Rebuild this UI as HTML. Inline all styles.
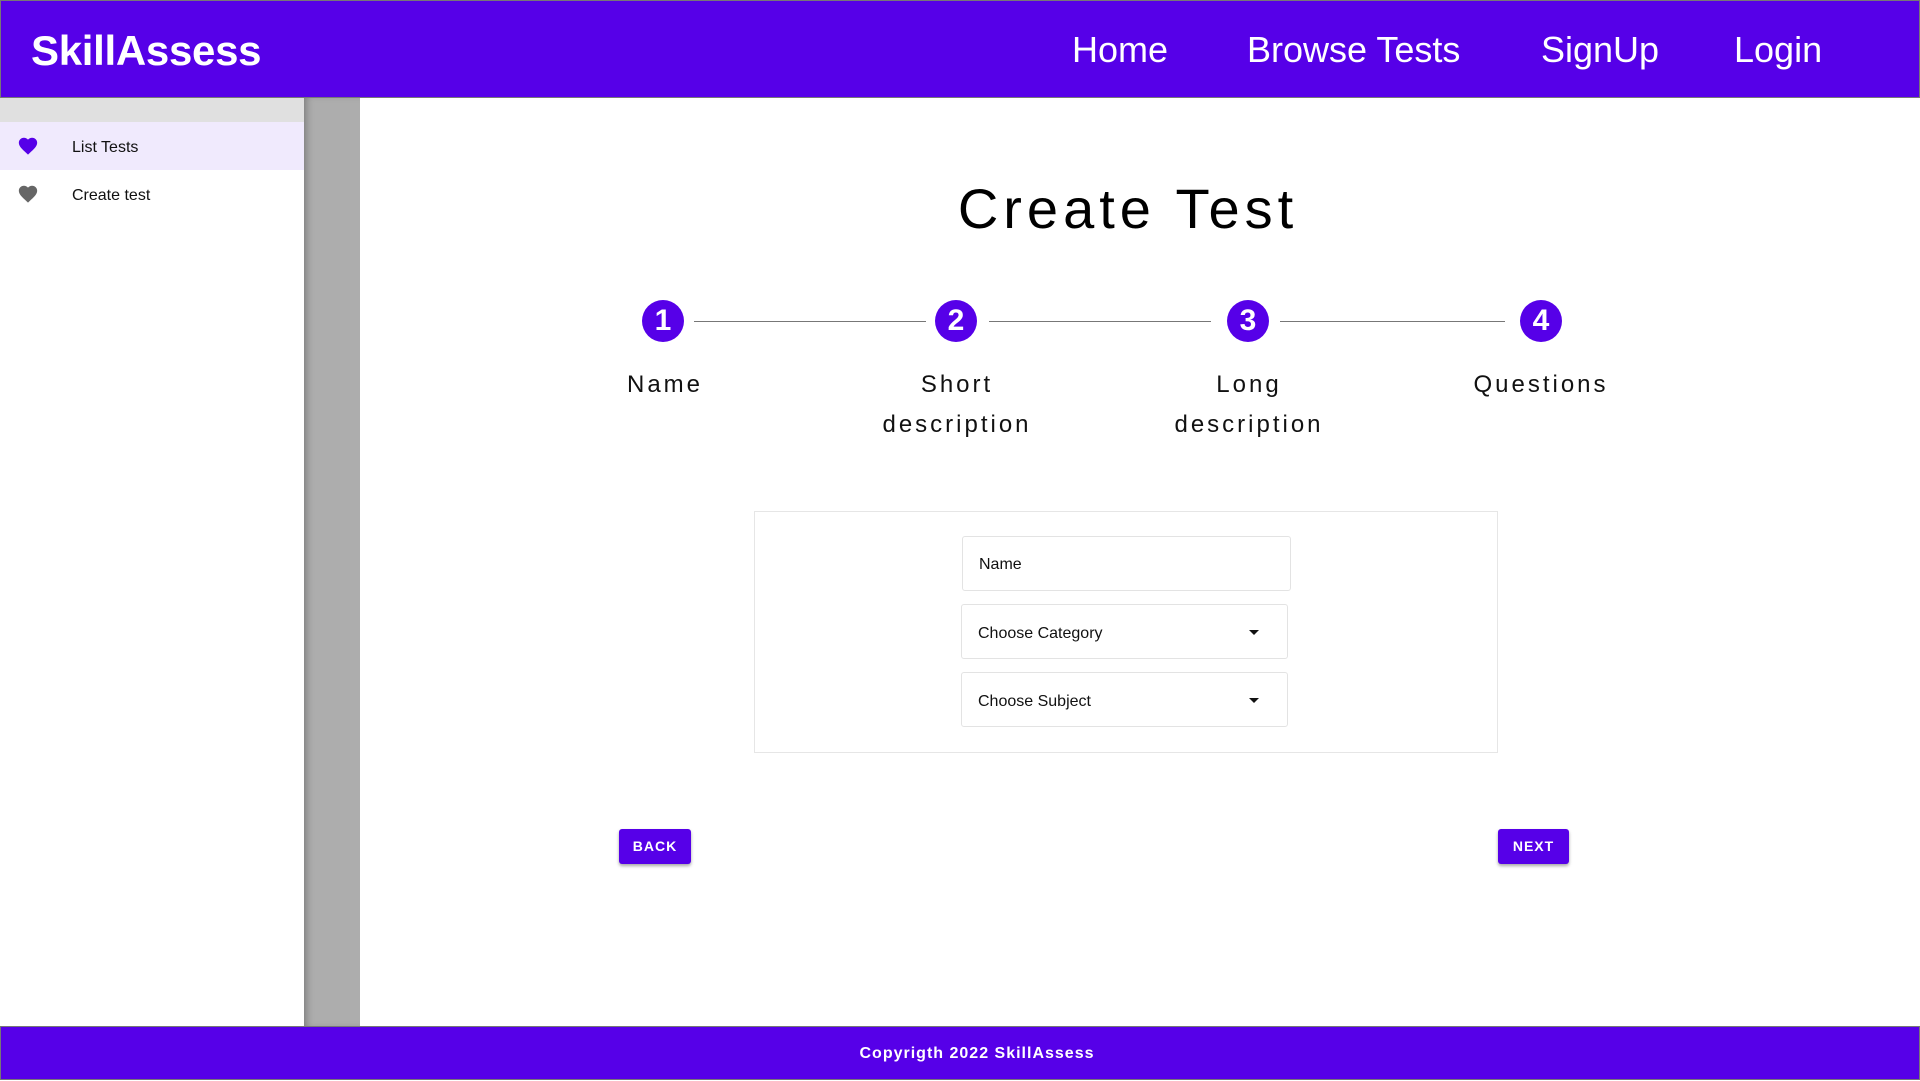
<!DOCTYPE html>
<html><head><style>
*{margin:0;padding:0;box-sizing:border-box}
body{width:1920px;height:1080px;position:relative;overflow:hidden;background:#fff;font-family:"Liberation Sans",sans-serif}
.hdr{position:absolute;left:0;top:0;width:1920px;height:98px;background:#5600e8;border:1px solid #777}
.logo{position:absolute;left:30px;top:26px;color:#fff;font-size:42px;font-weight:bold;letter-spacing:-0.3px}
.nav{position:absolute;top:28px;color:#fff;font-size:36px}
.side{position:absolute;left:0;top:98px;width:304px;height:928px;background:#fff}
.gbar{position:absolute;left:0;top:98px;width:304px;height:24px;background:#e0e0e0}
.row{position:absolute;left:0;width:304px;height:48px;font-size:16px;color:#111}
.row span{position:absolute;left:72px;top:17px}
.row svg{position:absolute;left:16px;top:13px}
.strip{position:absolute;left:304px;top:98px;width:56px;height:928px;background:#adadad;box-shadow:inset 6px 0 8px -4px rgba(0,0,0,.3)}
.ftr{position:absolute;left:0;top:1026px;width:1920px;height:54px;background:#5600e8;color:#fff;font-weight:bold;font-size:16px;text-align:center;line-height:54px;letter-spacing:1px;border:1px solid #777;padding-left:34px}
.title{position:absolute;left:828px;width:600px;text-align:center;top:176px;font-size:56px;letter-spacing:5px;font-weight:500}
.c{position:absolute;top:300px;width:42px;height:42px;border-radius:50%;background:#5600e8;color:#fff;font-weight:bold;font-size:30px;text-align:center;line-height:42px}
.ln{position:absolute;top:321px;height:1px;background:#777}
.lb{position:absolute;width:220px;text-align:center;top:365px;font-size:24px;letter-spacing:3px;line-height:40px;color:#111}
.card{position:absolute;left:754px;top:511px;width:744px;height:242px;border:1px solid #e6e6e6}
.fld{position:absolute;border:1px solid #e3e3e3;border-radius:3px;font-size:16px;color:#111;padding-left:16px}
.arr{position:absolute;right:28px;top:25px;width:0;height:0;border-left:5px solid transparent;border-right:5px solid transparent;border-top:5px solid #111}
.btn{position:absolute;top:829px;height:35px;background:#5600e8;color:#fff;font-weight:bold;font-size:14px;letter-spacing:1px;text-align:center;line-height:35px;border-radius:3px;box-shadow:0 2px 3px rgba(0,0,0,.35)}
</style></head><body>
<div class="hdr"><div class="logo">SkillAssess</div>
<div class="nav" style="left:1071px">Home</div>
<div class="nav" style="left:1246px">Browse Tests</div>
<div class="nav" style="left:1540px">SignUp</div>
<div class="nav" style="left:1733px">Login</div></div>
<div class="side"></div>
<div class="gbar"></div>
<div class="row" style="top:122px;background:#f0eafd"><svg width="24" height="22" viewBox="0 0 24 24"><path d="M12 21.35l-1.45-1.32C5.4 15.36 2 12.28 2 8.5 2 5.42 4.42 3 7.5 3c1.740 0 3.41.81 4.5 2.09C13.09 3.81 14.76 3 16.5 3 19.58 3 22 5.42 22 8.5c0 3.78-3.4 6.86-8.55 11.54L12 21.35z" fill="#5600e8"/></svg><span>List Tests</span></div>
<div class="row" style="top:170px"><svg width="24" height="22" viewBox="0 0 24 24"><path d="M12 21.35l-1.45-1.32C5.4 15.36 2 12.28 2 8.5 2 5.42 4.42 3 7.5 3c1.74 0 3.41.81 4.5 2.09C13.09 3.81 14.76 3 16.5 3 19.58 3 22 5.42 22 8.5c0 3.78-3.4 6.86-8.55 11.54L12 21.35z" fill="#666"/></svg><span>Create test</span></div>
<div class="strip"></div>
<div class="title">Create Test</div>
<div class="c" style="left:642px">1</div><div class="c" style="left:935px">2</div><div class="c" style="left:1227px">3</div><div class="c" style="left:1520px">4</div>
<div class="ln" style="left:694px;width:232px"></div><div class="ln" style="left:989px;width:222px"></div><div class="ln" style="left:1280px;width:225px"></div>
<div class="lb" style="left:555px">Name</div>
<div class="lb" style="left:847px">Short description</div>
<div class="lb" style="left:1139px">Long description</div>
<div class="lb" style="left:1431px">Questions</div>
<div class="card"></div>
<div class="fld" style="left:962px;top:536px;width:329px;height:55px;line-height:55px">Name</div>
<div class="fld" style="left:961px;top:604px;width:327px;height:55px;line-height:57px">Choose Category<div class="arr"></div></div>
<div class="fld" style="left:961px;top:672px;width:327px;height:55px;line-height:57px">Choose Subject<div class="arr"></div></div>
<div class="btn" style="left:619px;width:72px">BACK</div>
<div class="btn" style="left:1498px;width:71px">NEXT</div>
<div class="ftr">Copyrigth 2022 SkillAssess</div>
</body></html>
